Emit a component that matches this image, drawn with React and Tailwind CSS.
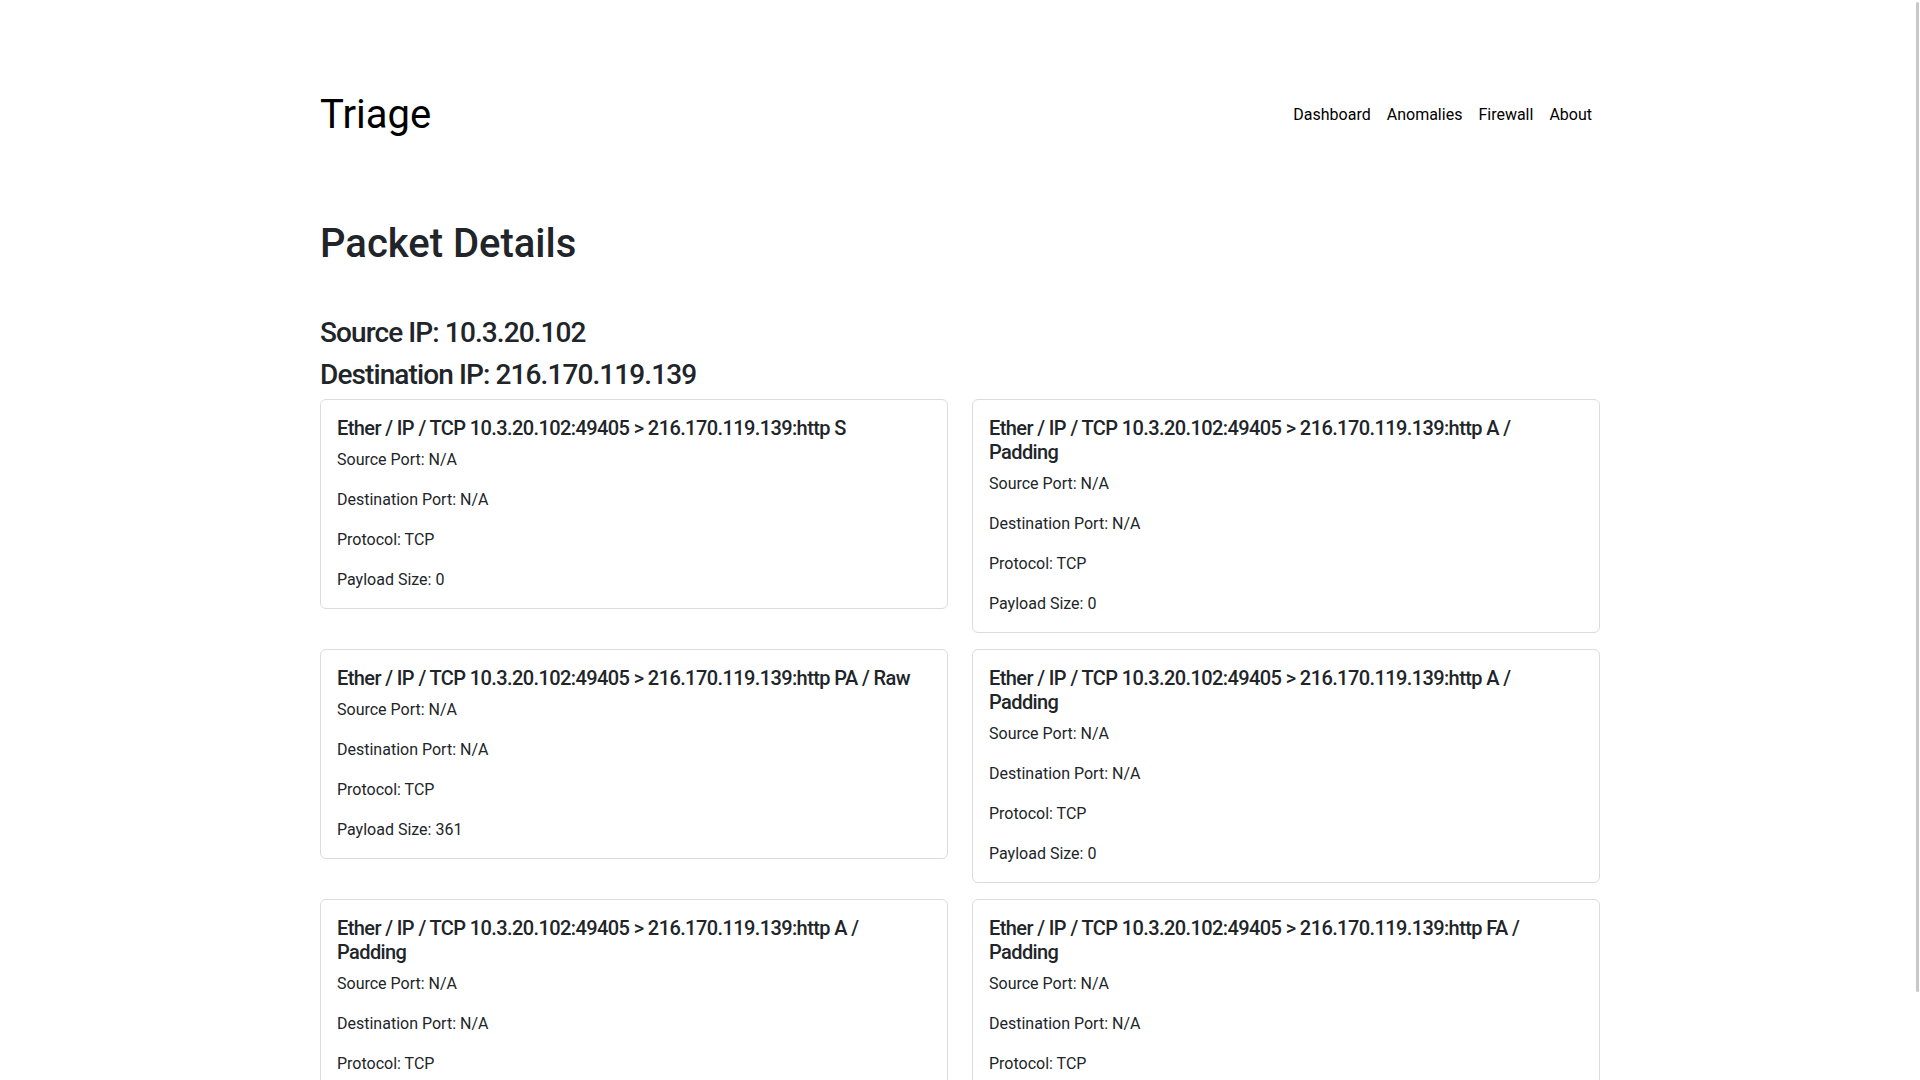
import React from 'react';

const packets = [
  { summary: 'Ether / IP / TCP 10.3.20.102:49405 > 216.170.119.139:http S', payload: 0 },
  { summary: 'Ether / IP / TCP 10.3.20.102:49405 > 216.170.119.139:http A / Padding', payload: 0 },
  { summary: 'Ether / IP / TCP 10.3.20.102:49405 > 216.170.119.139:http PA / Raw', payload: 361 },
  { summary: 'Ether / IP / TCP 10.3.20.102:49405 > 216.170.119.139:http A / Padding', payload: 0 },
  { summary: 'Ether / IP / TCP 10.3.20.102:49405 > 216.170.119.139:http A / Padding', payload: 0 },
  { summary: 'Ether / IP / TCP 10.3.20.102:49405 > 216.170.119.139:http FA / Padding', payload: 0 },
];

const navLinks = ['Dashboard', 'Anomalies', 'Firewall', 'About'];

const PacketCard = ({ packet }) => (
  <div className="mb-4 rounded-[6px] border border-[#dcdcdd] bg-white">
    <div className="p-4">
      <h5 className="mb-2 text-[20px] font-medium leading-[1.2] tracking-[-0.6px]">{packet.summary}</h5>
      <p className="mb-4 text-[16px] leading-[1.5]">Source Port: N/A</p>
      <p className="mb-4 text-[16px] leading-[1.5]">Destination Port: N/A</p>
      <p className="mb-4 text-[16px] leading-[1.5]">Protocol: TCP</p>
      <p className="text-[16px] leading-[1.5]">Payload Size: {packet.payload}</p>
    </div>
  </div>
);

const App = () => {
  return (
    <div className="min-h-screen bg-white font-['Roboto','Liberation_Sans',sans-serif] text-[#212529]">
      <div className="mx-auto w-[1280px] pb-8">
        {/* Navbar */}
        <nav className="flex items-center justify-between pt-[91px]">
          <a className="text-[40px] leading-[1.2] text-black">Triage</a>
          <ul className="flex">
            {navLinks.map((link) => (
              <li key={link}>
                <a className="block px-2 py-2 text-[16px] leading-[1.5] text-black">{link}</a>
              </li>
            ))}
          </ul>
        </nav>

        {/* Page heading */}
        <h1 className="mt-[81px] mb-12 text-[40px] font-medium leading-[1.2]">Packet Details</h1>
        <h3 className="mb-2 text-[28px] font-medium leading-[1.2] tracking-[-0.9px]">Source IP: 10.3.20.102</h3>
        <h3 className="mb-2 text-[28px] font-medium leading-[1.2] tracking-[-0.9px]">Destination IP: 216.170.119.139</h3>

        {/* Packets */}
        <div className="grid grid-cols-2 items-start gap-x-6">
          {packets.map((packet, index) => (
            <PacketCard key={index} packet={packet} />
          ))}
        </div>
      </div>

      {/* overlay scrollbar thumb */}
      <div className="fixed right-[1px] top-[2px] h-[990px] w-[3px] rounded-full bg-[#c8c8c8]" />
    </div>
  );
};

export default App;
